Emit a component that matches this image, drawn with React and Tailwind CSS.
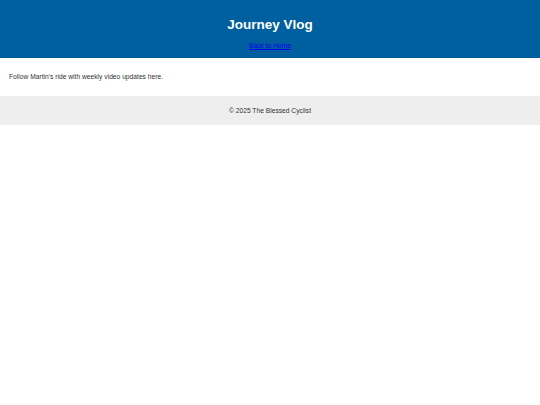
export default function App() {
  return (
    <div className="min-h-[405px] bg-white font-['Liberation_Sans',Arial,sans-serif] text-[6.7px] text-[#333]">
      <header className="bg-[#005f9e] h-[58px] pt-[17px] text-center">
        <h1 className="text-[13.5px] leading-[16px] font-bold text-white">Journey Vlog</h1>
        <nav className="mt-[9px] leading-[8px]">
          <a href="#" className="text-[#0000ee] underline">Back to Home</a>
        </nav>
      </header>
      <main className="h-[38px] pt-[15px] px-[9px] leading-[8px]">
        <p>Follow Martin's ride with weekly video updates here.</p>
      </main>
      <footer className="bg-[#eeeeee] h-[29px] flex items-center justify-center leading-[8px]">
        <p>© 2025 The Blessed Cyclist</p>
      </footer>
    </div>
  );
}
